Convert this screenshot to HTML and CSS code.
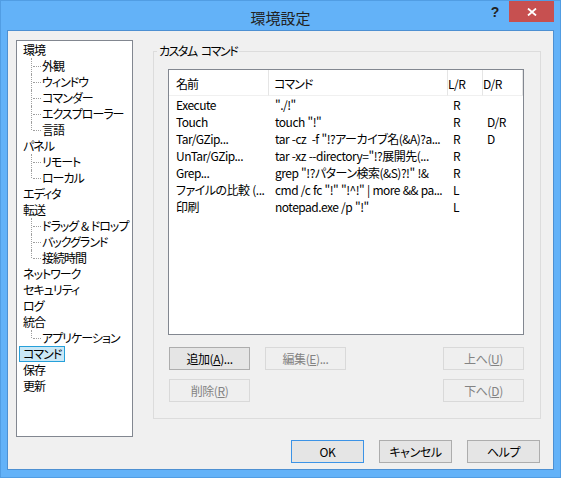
FILE: index.html
```html
<!DOCTYPE html>
<html lang="ja">
<head>
<meta charset="utf-8">
<title>環境設定</title>
<link rel="stylesheet" href="styles.css">
</head>
<body>
<div class="window">
  <div class="titlebar">
    <div class="title">環境設定</div>
    <div class="caption">
      <div class="help">?</div>
      <div class="close">
        <svg width="10" height="8" viewBox="0 0 10 8"><path d="M1 0.5 L9 7.5 M9 0.5 L1 7.5" stroke="#fff" stroke-width="1.8" fill="none"/></svg>
      </div>
    </div>
  </div>
  <div class="client">
    <div class="main">
      <ul class="tree">
        <li><span class="node">環境</span>
          <ul class="sub">
            <li>外観</li>
            <li>ウィンドウ</li>
            <li>コマンダー</li>
            <li>エクスプローラー</li>
            <li>言語</li>
          </ul>
        </li>
        <li><span class="node">パネル</span>
          <ul class="sub">
            <li>リモート</li>
            <li>ローカル</li>
          </ul>
        </li>
        <li><span class="node">エディタ</span></li>
        <li><span class="node">転送</span>
          <ul class="sub">
            <li>ドラッグ &amp; ドロップ</li>
            <li>バックグランド</li>
            <li>接続時間</li>
          </ul>
        </li>
        <li><span class="node">ネットワーク</span></li>
        <li><span class="node">セキュリティ</span></li>
        <li><span class="node">ログ</span></li>
        <li><span class="node">統合</span>
          <ul class="sub">
            <li>アプリケーション</li>
          </ul>
        </li>
        <li><span class="node sel">コマンド</span></li>
        <li><span class="node">保存</span></li>
        <li><span class="node">更新</span></li>
      </ul>
      <fieldset class="group">
        <legend>カスタム コマンド</legend>
        <div class="group-body">
          <div class="listview">
            <div class="lv-head">
              <div class="c1">名前</div>
              <div class="c2">コマンド</div>
              <div class="c3">L/R</div>
              <div class="c4">D/R</div>
            </div>
            <div class="lv-row"><div class="c1">Execute</div><div class="c2">"./!"</div><div class="c3">R</div><div class="c4"></div></div>
            <div class="lv-row"><div class="c1">Touch</div><div class="c2">touch "!"</div><div class="c3">R</div><div class="c4">D/R</div></div>
            <div class="lv-row"><div class="c1">Tar/GZip...</div><div class="c2">tar -cz  -f "!?アーカイブ名(&amp;A)?a...</div><div class="c3">R</div><div class="c4">D</div></div>
            <div class="lv-row"><div class="c1">UnTar/GZip...</div><div class="c2">tar -xz --directory="!?展開先(...</div><div class="c3">R</div><div class="c4"></div></div>
            <div class="lv-row"><div class="c1">Grep...</div><div class="c2">grep "!?パターン検索(&amp;S)?!" !&amp;</div><div class="c3">R</div><div class="c4"></div></div>
            <div class="lv-row"><div class="c1">ファイルの比較 (...</div><div class="c2">cmd /c fc "!" "!^!" | more &amp;&amp; pa...</div><div class="c3">L</div><div class="c4"></div></div>
            <div class="lv-row"><div class="c1">印刷</div><div class="c2">notepad.exe /p "!"</div><div class="c3">L</div><div class="c4"></div></div>
          </div>
          <div class="btn-row first">
            <button class="btn">追加(<u>A</u>)...</button>
            <button class="btn" disabled>編集(<u>E</u>)...</button>
            <button class="btn push" disabled>上へ(<u>U</u>)</button>
          </div>
          <div class="btn-row second">
            <button class="btn" disabled>削除(<u>R</u>)</button>
            <button class="btn push" disabled>下へ(<u>D</u>)</button>
          </div>
        </div>
      </fieldset>
    </div>
    <div class="footer">
      <button class="btn wide default">OK</button>
      <button class="btn wide">キャンセル</button>
      <button class="btn wide">ヘルプ</button>
    </div>
  </div>
</div>
</body>
</html>
```
FILE: styles.css
```css
html, body {
  margin: 0;
  padding: 0;
}
body {
  width: 561px;
  height: 478px;
  overflow: hidden;
  font-family: "Noto Sans CJK JP", sans-serif;
  font-size: 12px;
  font-feature-settings: "palt" 1;
  letter-spacing: -1px;
  word-spacing: 1px;
  color: #000;
}
.window {
  box-sizing: border-box;
  width: 561px;
  height: 478px;
  border: 1px solid #519de3;
  background: #63b2f8;
  display: flex;
  flex-direction: column;
}
.titlebar {
  height: 29px;
  flex: none;
  display: grid;
  grid-template-columns: 76px 1fr 76px;
}
.title {
  grid-column: 2;
  text-align: center;
  font-size: 15px;
  letter-spacing: 0;
  line-height: 20px;
  padding-top: 7px;
  color: #222;
}
.caption {
  display: flex;
  align-items: flex-start;
  padding-right: 6px;
}
.help {
  width: 22px;
  margin-right: 3px;
  text-align: center;
  font-family: "Liberation Sans", sans-serif;
  font-weight: bold;
  font-size: 14px;
  letter-spacing: 0;
  line-height: 22px;
  color: #222;
}
.close {
  width: 45px;
  height: 21px;
  background: #c75050;
  display: flex;
  align-items: center;
  justify-content: center;
}
.close svg {
  display: block;
}
.client {
  flex: 1;
  margin: 0 6px 7px;
  border: 1px solid #4d90d2;
  background: #f0f0f0;
  padding: 9px 12px 6px 8px;
  display: flex;
  flex-direction: column;
}
.main {
  display: flex;
  gap: 20px;
  height: 397px;
}
/* tree */
.tree {
  box-sizing: border-box;
  width: 117px;
  height: 397px;
  flex: none;
  margin: 0;
  padding: 1px 0 0 0;
  list-style: none;
  background: #fff;
  border: 1px solid #828790;
  line-height: 16px;
  white-space: nowrap;
  overflow: hidden;
}
.tree > li {
  padding-left: 6px;
}
.node {
  display: inline-block;
  height: 16px;
}
.node.sel {
  box-sizing: border-box;
  margin-left: -4px;
  padding: 0 3px;
  border: 1px solid #26a0da;
  background: #cbe8f6;
  line-height: 14px;
}
.sub {
  list-style: none;
  margin: 0 0 0 -6px;
  padding: 0;
}
.sub li {
  position: relative;
  height: 16px;
  padding-left: 25px;
}
.sub li::before {
  content: "";
  position: absolute;
  left: 14px;
  top: 0;
  bottom: 0;
  border-left: 1px dotted #a0a0a0;
}
.sub li:last-child::before {
  bottom: 8px;
}
.sub li::after {
  content: "";
  position: absolute;
  left: 16px;
  top: 8px;
  width: 8px;
  border-top: 1px dotted #a0a0a0;
}
/* group box */
.group {
  flex: 1;
  align-self: flex-start;
  margin: 3px 0 0 0;
  padding: 0;
  border: 1px solid #dcdcdc;
  min-width: 0;
}
.group legend {
  margin-left: 3px;
  padding: 0 2px;
  line-height: 16px;
  letter-spacing: -1.5px;
  word-spacing: 3px;
}
.group-body {
  padding: 10px 16px 16px 14px;
}
.listview {
  box-sizing: border-box;
  width: 356px;
  height: 266px;
  border: 1px solid #828790;
  background: #fff;
  overflow: hidden;
}
.lv-head,
.lv-row {
  display: grid;
  grid-template-columns: 100px 179px 35px 40px;
}
.lv-head > div {
  box-sizing: border-box;
  height: 26px;
  padding-top: 6px;
  line-height: 16px;
  border-right: 1px solid #e5e5e5;
  border-bottom: 1px solid #f0f0f0;
  white-space: nowrap;
  overflow: hidden;
}
.lv-head .c1 { padding-left: 7px; }
.lv-head .c2 { padding-left: 5px; }
.lv-head .c3 { padding-left: 0; letter-spacing: -0.5px; }
.lv-head .c4 { padding-left: 0; letter-spacing: -0.5px; }
.lv-row > div {
  height: 17px;
  line-height: 17px;
  white-space: pre;
  overflow: hidden;
  letter-spacing: -0.5px;
  word-spacing: 0.5px;
}
.lv-row .c1 { padding-left: 7px; }
.lv-row .c2 { padding-left: 6px; }
.lv-row .c3 { padding-left: 5px; }
.lv-row .c4 { padding-left: 4px; }
/* buttons */
.btn {
  box-sizing: border-box;
  width: 81px;
  height: 23px;
  padding: 0;
  border: 1px solid #adadad;
  background: #e5e5e5;
  font-family: inherit;
  font-size: 12px;
  font-feature-settings: "palt" 1;
  letter-spacing: -0.4px;
  color: #000;
  line-height: 21px;
  border-radius: 0;
}
.btn:disabled {
  border-color: #d9d9d9;
  background: #efefef;
  color: #838383;
}
.btn u {
  text-underline-offset: 1px;
}
.btn-row {
  display: flex;
  gap: 15px;
  width: 355px;
  margin-left: 1px;
}
.btn-row.first {
  margin-top: 12px;
}
.btn-row.second {
  margin-top: 9px;
}
.push {
  margin-left: auto;
}
.footer {
  margin-top: 3px;
  margin-right: 1px;
  display: flex;
  justify-content: flex-end;
  gap: 15px;
}
.btn.wide {
  width: 73px;
}
.btn.default {
  border-color: #3c93e6;
}
```
